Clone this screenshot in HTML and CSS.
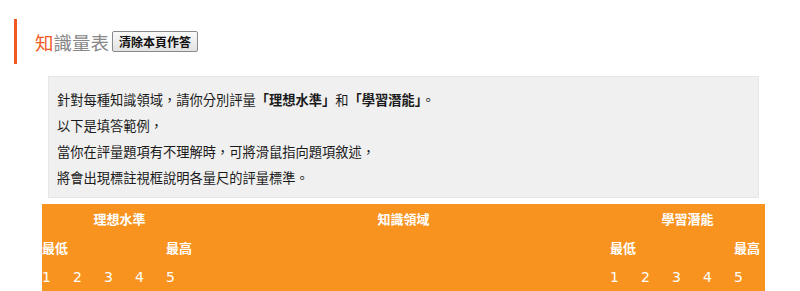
FILE: index.html
```html
<!DOCTYPE html>
<html lang="zh-Hant">

<head>
    <meta charset="UTF-8">
    <meta name="viewport" content="width=device-width, initial-scale=1.0">
    <title>知識量表</title>
    <link rel="stylesheet" href="styles.css">
</head>

<body>
    <div class="page-title">
        <h2><span class="first">知</span>識量表</h2>
        <button class="clear-btn">清除本頁作答</button>
    </div>

    <div class="content">
        <div class="intro">
            <p>針對每種知識領域，請你分別評量<b>「理想水準」</b>和<b>「學習潛能」</b>。</p>
            <p>以下是填答範例，</p>
            <p>當你在評量題項有不理解時，可將滑鼠指向題項敘述，</p>
            <p>將會出現標註視框說明各量尺的評量標準。</p>
        </div>

        <table class="scale">
            <colgroup>
                <col class="num"><col class="num"><col class="num"><col class="num"><col class="num">
                <col class="domain">
                <col class="num"><col class="num"><col class="num"><col class="num"><col class="num">
            </colgroup>
            <tr class="head">
                <th colspan="5">理想水準</th>
                <th>知識領域</th>
                <th colspan="5">學習潛能</th>
            </tr>
            <tr class="ends">
                <td>最低</td><td></td><td></td><td></td><td>最高</td>
                <td></td>
                <td>最低</td><td></td><td></td><td></td><td>最高</td>
            </tr>
            <tr class="nums">
                <td>1</td><td>2</td><td>3</td><td>4</td><td>5</td>
                <td></td>
                <td>1</td><td>2</td><td>3</td><td>4</td><td>5</td>
            </tr>
        </table>
    </div>
</body>

</html>
```

FILE: styles.css
```css
body {
    font-family: "DejaVu Sans", "Noto Sans CJK TC", sans-serif;
    margin: 0;
    padding: 19px 0 0 0;
    background-color: white;
    color: #222;
}

.page-title {
    margin-left: 14px;
    height: 45px;
    border-left: 3px solid #f05a22;
    padding-left: 18px;
    display: flex;
    align-items: center;
    gap: 3px;
}

.page-title h2 {
    margin: 0;
    font-family: "Noto Sans CJK TC", sans-serif;
    font-size: 18.5px;
    font-weight: normal;
    color: #888;
}

.page-title .first {
    color: #f05a22;
}

.clear-btn {
    font-family: "Noto Sans CJK TC", sans-serif;
    font-size: 12px;
    font-weight: bold;
    color: #111;
    height: 21px;
    padding: 0 6px;
    border: 1px solid #8a8a8a;
    border-radius: 2px;
    background: linear-gradient(#fafafa, #e2e2e2);
    cursor: pointer;
}

.content {
    margin: 12px 0 0 42px;
    width: 723px;
}

.intro {
    margin: 0 6px;
    background-color: #f0f0f0;
    border: 1px solid #e6e6e6;
    padding: 10px 8px 6px 8px;
    font-family: "Noto Sans CJK TC", sans-serif;
    font-size: 13.25px;
    color: #1a1a1a;
}

.intro p {
    margin: 0;
    line-height: 26px;
}

.scale {
    margin-top: 6px;
    width: 723px;
    table-layout: fixed;
    border-collapse: collapse;
    background-color: #f8931f;
    color: white;
    font-weight: bold;
    font-size: 13px;
}

.scale col.num {
    width: 31px;
}

.scale col.domain {
    width: 413px;
}

.scale th,
.scale td {
    padding: 0;
    height: 29px;
    text-align: left;
    white-space: nowrap;
}

.scale th {
    text-align: center;
    font-family: "Noto Sans CJK TC", sans-serif;
}

.scale .ends td {
    font-family: "Noto Sans CJK TC", sans-serif;
}

.scale .nums td {
    font-weight: normal;
    font-size: 14px;
}
```
